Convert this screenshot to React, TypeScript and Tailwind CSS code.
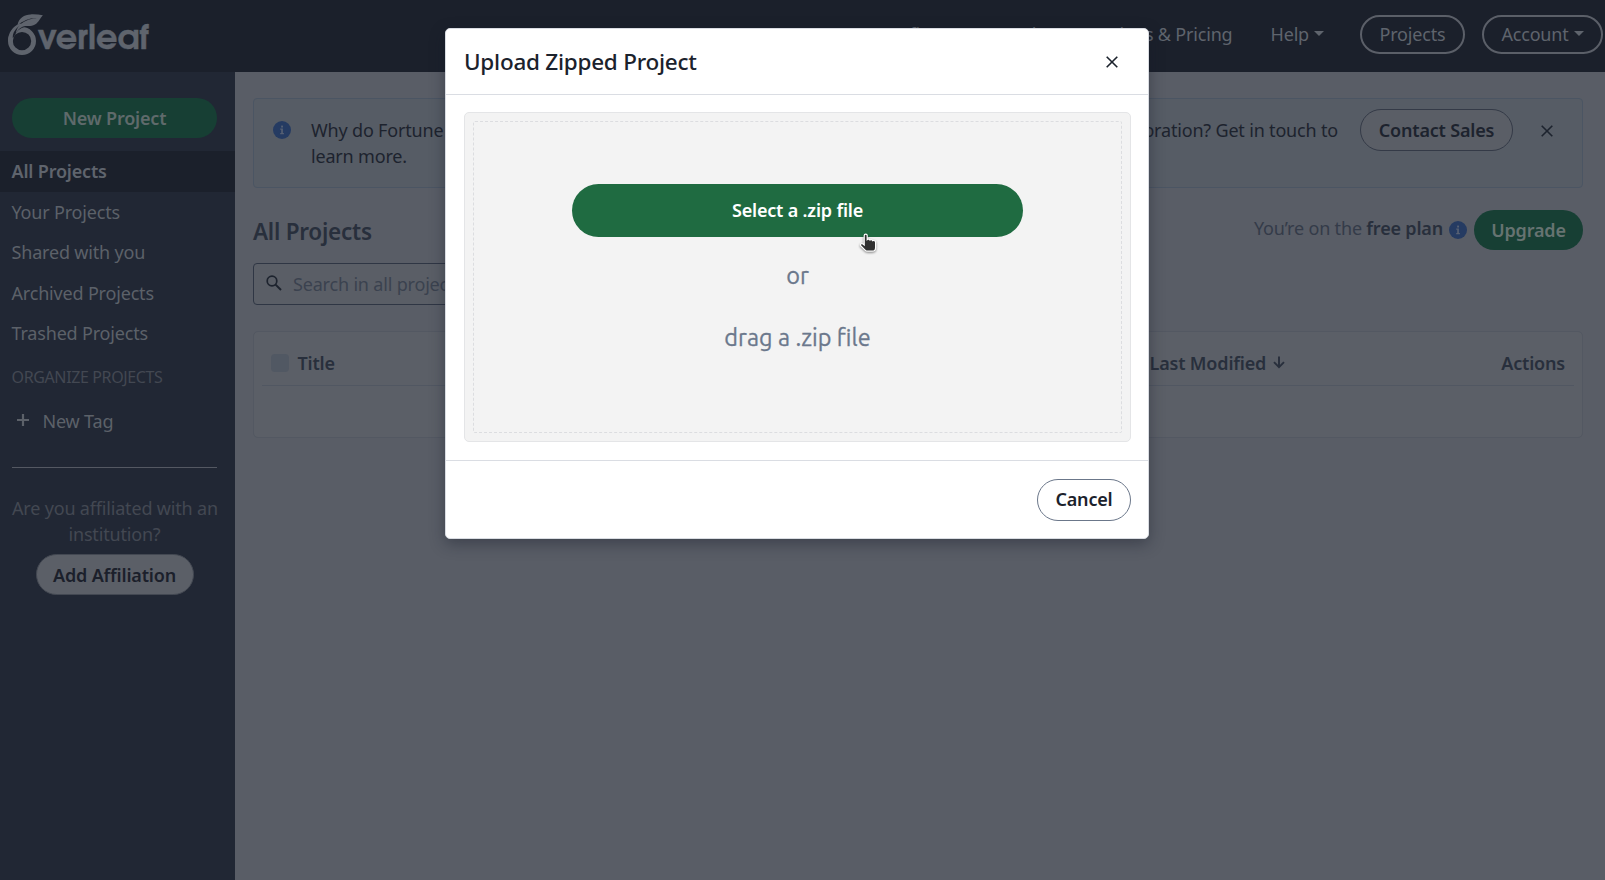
import React from "react";

function OverleafLogo() {
  return (
    <div className="flex h-[42px] items-start text-[#5f646d]">
      <svg width="36" height="42" viewBox="0 0 36 42" className="shrink-0">
        <circle cx="14" cy="27.1" r="11.6" fill="none" stroke="currentColor" strokeWidth="4.8" />
        <path d="M1 24 C2 15 8 9 16 6 L27 5 L20 12.4 C14 12.4 9 16 7.4 20.6 L5 24 Z" fill="#1b202b" />
        <path d="M0 27.5 C0 18 5 12.5 11.6 9.4 L15 10 C9.5 12.5 5.4 17 4.8 22 L4.8 28 Z" fill="currentColor" />
        <path
          d="M9.5 11 C10.5 4 16.5 0.4 22.5 0.4 C27 0.2 31 0.6 34.9 1.2 C31.8 4.2 30.8 8.2 27 10.6 C22.8 13 18.5 11.4 14.6 12.8 C10.6 14.6 9 17 7.6 20.2 C8.8 12.8 13 8.4 21 5.6 C24.5 4.6 26.6 4.2 28.8 4 C22 3.6 15 7 9.5 11 Z"
          fill="currentColor"
        />
      </svg>
      <span className="-ml-[6px] mt-[5px] font-['URW_Gothic','TeX_Gyre_Adventor','Century_Gothic','Lato',sans-serif] text-[33.5px] leading-[42px] font-black tracking-[0px] [-webkit-text-stroke:0.4px]">verleaf</span>
    </div>
  );
}

function Caret() {
  return (
    <svg width="10" height="5" viewBox="0 0 10 5" className="ml-[5px] shrink-0">
      <path d="M0 0h10L5 5z" fill="currentColor" />
    </svg>
  );
}

function InfoIcon() {
  return (
    <svg width="18" height="18" viewBox="0 0 18 18" className="shrink-0">
      <circle cx="9" cy="9" r="9" fill="#253b62" />
      <rect x="8.1" y="4.6" width="1.9" height="1.9" fill="#566073" />
      <path d="M7.2 7.6h2.7v4.4h1v1.2H7.2V12h1V8.8h-1z" fill="#566073" />
    </svg>
  );
}

function CloseIcon() {
  return (
    <svg width="12" height="12" viewBox="0 0 12 12" className="shrink-0">
      <path d="M0.7 0.7l10.6 10.6M11.3 0.7L0.7 11.3" stroke="currentColor" strokeWidth="1.6" fill="none" />
    </svg>
  );
}

function SearchIcon() {
  return (
    <svg width="17" height="17" viewBox="0 0 17 17" className="shrink-0">
      <circle cx="6" cy="6" r="4.8" fill="none" stroke="currentColor" strokeWidth="1.7" />
      <path d="M9.6 9.6l5.4 5.4" stroke="currentColor" strokeWidth="2" />
    </svg>
  );
}

function HandPointer() {
  return (
    <svg width="20" height="21" viewBox="0 0 20 21" className="absolute left-[859px] top-[232.5px] drop-shadow-[0_1px_1px_rgba(0,0,0,0.45)]">
      <path
        d="M5.2 2.6 C5.2 0.6 8.2 0.6 8.2 2.6 V6.6 C9 5.8 10.6 6 11 7 C12 6.4 13.4 6.8 13.7 7.7 C15.2 7.2 16.6 7.8 16.6 9.4 V14.4 C16.6 16.6 15.2 18.2 13.2 18.2 H8.6 C7.4 18.2 6.6 17.6 5.8 16.8 L1.7 12.8 C0.6 11.6 2.2 10 3.6 10.8 L5.2 12 Z"
        fill="#303030"
        stroke="#fff"
        strokeWidth="1.2"
      />
    </svg>
  );
}

const filters = ["Your Projects", "Shared with you", "Archived Projects", "Trashed Projects"];

function Header() {
  return (
    <header className="flex h-[72px] shrink-0 items-start justify-between bg-[#1b202b] pl-2 text-[#5f646d]">
      <div className="pt-[13.5px] tracking-normal">
        <OverleafLogo />
      </div>
      <nav className="flex h-[69px] items-center pr-[2px]">
        <span className="mr-[36px] flex items-center pb-[2px]">Features &amp; Benefits<Caret /></span>
        <span className="mr-[38px] pb-[2px]">Templates</span>
        <span className="mr-[38px] pb-[2px]">Plans &amp; Pricing</span>
        <span className="mr-[36px] flex items-center pb-[2px]">Help<Caret /></span>
        <span className="mr-[17px] flex h-[39px] w-[105px] items-center justify-center rounded-full border-2 border-[#5b5f68] pb-[2px]">Projects</span>
        <span className="flex h-[39px] w-[121px] items-center justify-center rounded-full border-2 border-[#5b5f68] pb-[2px]">Account<Caret /></span>
      </nav>
    </header>
  );
}

function Sidebar() {
  return (
    <aside className="flex w-[235px] shrink-0 flex-col bg-[#212734] pt-[26px] text-[#5c6169]">
      <button className="mx-3 mb-[13px] h-10 w-[205px] rounded-full bg-[#173f34] font-semibold text-[#5f6a6b]">New Project</button>
      <div className="flex h-[41px] items-center bg-[#1b202b] pr-3 pb-[2px] pl-[11.5px] font-semibold text-[#5f646d]">All Projects</div>
      {filters.map((f) => (
        <div key={f} className="flex h-[40.5px] items-center pr-3 pb-[1.5px] pl-[11.5px]">{f}</div>
      ))}
      <div className="mt-[11px] flex h-6 items-center pl-[11.5px] text-base tracking-[-0.37px] text-[#434852]">ORGANIZE PROJECTS</div>
      <div className="mt-[19px] flex h-[26px] items-center pl-[17px]">
        <svg width="12" height="12" viewBox="0 0 12 12" className="mb-[2px]">
          <path d="M6 0v12M0 6h12" stroke="currentColor" strokeWidth="2.2" />
        </svg>
        <span className="ml-[13.5px]">New Tag</span>
      </div>
      <div className="mx-3 mt-[33px] h-px w-[205px] bg-[#545862]" />
      <p className="mx-3 mt-[27px] w-[205px] text-center leading-[26px] whitespace-nowrap text-[#434852]">
        Are you affiliated with an<br />institution?
      </p>
      <button className="mt-[7px] ml-[35.5px] h-[41px] w-[158px] rounded-full border border-[#434852] bg-[#5b5f67] font-semibold text-[#1b202b]">Add Affiliation</button>
    </aside>
  );
}

function Banner() {
  return (
    <section className="flex h-[90px] items-start rounded-[4px] border border-[#4b5563] bg-[#565c65] pr-[29px] pl-[19px] text-[#1d232e]">
      <div className="pt-[22px]"><InfoIcon /></div>
      <p className="ml-5 w-[1027px] pt-[18px] leading-[26px]">
        <span className="flex justify-between whitespace-nowrap">
          <span>Why do Fortune 500 companies and top research institutions trust Overleaf to</span>
          <span>streamline collaboration? Get in touch to</span>
        </span>
        <span className="block">learn more.</span>
      </p>
      <button className="mt-[10px] ml-[22px] h-[42px] w-[153px] shrink-0 rounded-full border border-[#343a47] bg-[#5a5e66] font-semibold">Contact Sales</button>
      <span className="mt-[26px] ml-auto"><CloseIcon /></span>
    </section>
  );
}

function Main() {
  return (
    <main className="min-w-0 flex-1 bg-[#595d66] px-[22px] pt-[26px] pl-[18px] text-[#282f3c]">
      <Banner />
      <div className="mt-[22px] flex h-10 items-center justify-between">
        <h1 className="pt-[2px] text-[22.5px] font-semibold tracking-[-0.25px]">All Projects</h1>
        <div className="flex items-center">
          <span className="pb-[4px] text-[#343b49]">You’re on the <b className="font-semibold text-[#282f3c]">free plan</b></span>
          <span className="mr-[7px] ml-[6px]"><InfoIcon /></span>
          <button className="h-10 w-[109px] rounded-full bg-[#173f34] font-semibold text-[#667371]">Upgrade</button>
        </div>
      </div>
      <div className="mt-[13px] flex h-[42px] w-[650px] items-center rounded-[4px] border border-[#2f3644] bg-[#5a5e66] pl-3 text-[#3b424f]">
        <span className="pb-[2px] text-[#1d232e]"><SearchIcon /></span>
        <span className="ml-[10px]">Search in all projects…</span>
      </div>
      <section className="mt-[26px] h-[107px] rounded-[5px] border border-[#535862] bg-[#5b5f67] px-2 pt-2 font-semibold">
        <div className="flex h-[46px] items-center border-b border-[#515762] pr-[9px] pl-[9px]">
          <span className="h-[18px] w-[18px] rounded-[4px] bg-[#515863]" />
          <span className="ml-[8.5px] w-[852px]">Title</span>
          <span className="mr-[7px]">Last Modified</span>
          <svg width="12" height="13" viewBox="0 0 12 13" className="mb-[1px]">
            <path d="M6 0.5v10.5M1 6.2l5 5 5-5" stroke="currentColor" strokeWidth="1.9" fill="none" />
          </svg>
          <span className="ml-auto">Actions</span>
        </div>
      </section>
    </main>
  );
}

function UploadModal() {
  return (
    <div className="absolute top-[28px] left-[445px] flex h-[511px] w-[704px] flex-col rounded-[5px] border border-[#d9dce2] bg-white text-[#1b222c] shadow-[0_5px_15px_rgba(20,25,40,0.4)]">
      <div className="flex h-[66px] items-center justify-between border-b border-[#dadde3] pr-[30px] pl-[18px]">
        <h2 className="text-[22.5px] font-medium tracking-[-0.25px]">Upload Zipped Project</h2>
        <CloseIcon />
      </div>
      <div className="flex-1 p-[17px] pl-[18px]">
        <div className="h-[330px] w-[667px] rounded-[5px] border border-[#e4e5e7] bg-[#f3f3f3] p-2">
          <div className="flex h-full flex-col items-center rounded-[2px] border border-dashed border-[#dcdde0] pt-[62px] text-[23.5px] tracking-normal text-[#6b788c]">
            <button className="h-[53px] w-[451px] rounded-full bg-[#1f6b41] pb-[1px] text-lg font-semibold tracking-[-0.18px] text-white">Select a .zip file</button>
            <span className="mt-[23px] font-['Ubuntu','Noto_Sans',sans-serif] leading-[30px] [-webkit-text-stroke:0.3px]">or</span>
            <span className="mt-[32px] font-['Ubuntu','Noto_Sans',sans-serif] leading-[30px] [-webkit-text-stroke:0.3px]">drag a .zip file</span>
          </div>
        </div>
      </div>
      <div className="flex h-[78px] items-center justify-end border-t border-[#dadde3] pr-[17px]">
        <button className="h-[42px] w-[94px] rounded-full border border-[#6b778a] pb-[1px] font-semibold">Cancel</button>
      </div>
    </div>
  );
}

export default function App() {
  return (
    <div className="relative flex h-[880px] w-[1605px] flex-col overflow-hidden font-['Noto_Sans',sans-serif] text-lg tracking-[-0.18px]">
      <Header />
      <div className="flex min-h-0 flex-1">
        <Sidebar />
        <Main />
      </div>
      <UploadModal />
      <HandPointer />
    </div>
  );
}
